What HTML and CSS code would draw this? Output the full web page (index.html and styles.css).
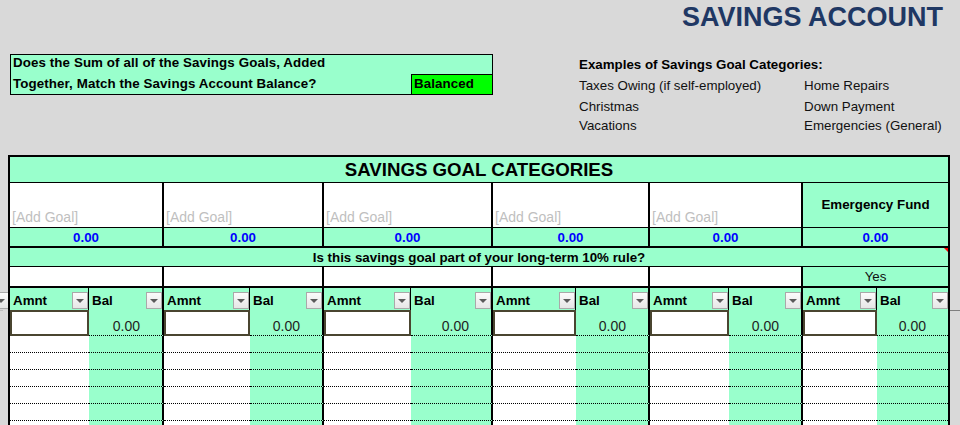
FILE: index.html
```html
<!DOCTYPE html>
<html lang="en">
<head>
<meta charset="utf-8">
<title>Savings Account</title>
<link rel="stylesheet" href="styles.css">
</head>
<body>
<header class="top">
  <div class="top-left">
    <div class="check">
      <div class="check-row1">Does the Sum of all of the Savings Goals, Added</div>
      <div class="check-row2">
        <span class="check-q">Together, Match the Savings Account Balance?</span>
        <span class="status">Balanced</span>
      </div>
    </div>
  </div>
  <div class="top-right">
    <h1 class="title">SAVINGS ACCOUNT</h1>
    <div class="examples">
      <div class="ex-head">Examples of Savings Goal Categories:</div>
      <div>Taxes Owing (if self-employed)</div><div>Home Repairs</div>
      <div>Christmas</div><div>Down Payment</div>
      <div>Vacations</div><div>Emergencies (General)</div>
    </div>
  </div>
</header>

<div class="sheet-wrap">
  <div class="gutter gutter-left">
    <div class="gutter-fill"></div>
    <span class="flt flt-cut"></span>
    <div class="pane-line pane-short"></div>
  </div>

  <div class="sheet">
    <div class="sheet-title">SAVINGS GOAL CATEGORIES</div>

    <div class="goal ge">[Add Goal]</div>
    <div class="goal ge">[Add Goal]</div>
    <div class="goal ge">[Add Goal]</div>
    <div class="goal ge">[Add Goal]</div>
    <div class="goal ge">[Add Goal]</div>
    <div class="goal goal-fixed">Emergency Fund</div>

    <div class="total ge">0.00</div>
    <div class="total ge">0.00</div>
    <div class="total ge">0.00</div>
    <div class="total ge">0.00</div>
    <div class="total ge">0.00</div>
    <div class="total">0.00</div>

    <div class="question">Is this savings goal part of your long-term 10% rule?</div>

    <div class="rule ge"></div>
    <div class="rule ge"></div>
    <div class="rule ge"></div>
    <div class="rule ge"></div>
    <div class="rule ge"></div>
    <div class="rule rule-yes">Yes</div>

    <div class="hd hd-a"><span class="hd-t">Amnt</span><span class="flt"></span></div>
    <div class="hd ge"><span class="hd-t">Bal</span><span class="flt"></span></div>
    <div class="hd hd-a"><span class="hd-t">Amnt</span><span class="flt"></span></div>
    <div class="hd ge"><span class="hd-t">Bal</span><span class="flt"></span></div>
    <div class="hd hd-a"><span class="hd-t">Amnt</span><span class="flt"></span></div>
    <div class="hd ge"><span class="hd-t">Bal</span><span class="flt"></span></div>
    <div class="hd hd-a"><span class="hd-t">Amnt</span><span class="flt"></span></div>
    <div class="hd ge"><span class="hd-t">Bal</span><span class="flt"></span></div>
    <div class="hd hd-a"><span class="hd-t">Amnt</span><span class="flt"></span></div>
    <div class="hd ge"><span class="hd-t">Bal</span><span class="flt"></span></div>
    <div class="hd hd-a"><span class="hd-t">Amnt</span><span class="flt"></span></div>
    <div class="hd"><span class="hd-t">Bal</span><span class="flt"></span></div>

    <div class="in"></div><div class="bal ge">0.00</div>
    <div class="in"></div><div class="bal ge">0.00</div>
    <div class="in"></div><div class="bal ge">0.00</div>
    <div class="in"></div><div class="bal ge">0.00</div>
    <div class="in"></div><div class="bal ge">0.00</div>
    <div class="in"></div><div class="bal">0.00</div>

    <div class="ea"></div><div class="eb ge"></div><div class="ea"></div><div class="eb ge"></div><div class="ea"></div><div class="eb ge"></div><div class="ea"></div><div class="eb ge"></div><div class="ea"></div><div class="eb ge"></div><div class="ea"></div><div class="eb"></div>
    <div class="ea"></div><div class="eb ge"></div><div class="ea"></div><div class="eb ge"></div><div class="ea"></div><div class="eb ge"></div><div class="ea"></div><div class="eb ge"></div><div class="ea"></div><div class="eb ge"></div><div class="ea"></div><div class="eb"></div>
    <div class="ea"></div><div class="eb ge"></div><div class="ea"></div><div class="eb ge"></div><div class="ea"></div><div class="eb ge"></div><div class="ea"></div><div class="eb ge"></div><div class="ea"></div><div class="eb ge"></div><div class="ea"></div><div class="eb"></div>
    <div class="ea"></div><div class="eb ge"></div><div class="ea"></div><div class="eb ge"></div><div class="ea"></div><div class="eb ge"></div><div class="ea"></div><div class="eb ge"></div><div class="ea"></div><div class="eb ge"></div><div class="ea"></div><div class="eb"></div>
    <div class="ea"></div><div class="eb ge"></div><div class="ea"></div><div class="eb ge"></div><div class="ea"></div><div class="eb ge"></div><div class="ea"></div><div class="eb ge"></div><div class="ea"></div><div class="eb ge"></div><div class="ea"></div><div class="eb"></div>
    <div class="ea"></div><div class="eb ge"></div><div class="ea"></div><div class="eb ge"></div><div class="ea"></div><div class="eb ge"></div><div class="ea"></div><div class="eb ge"></div><div class="ea"></div><div class="eb ge"></div><div class="ea"></div><div class="eb"></div>
  </div>

  <div class="gutter gutter-right">
    <div class="gutter-fill"></div>
    <div class="pane-line"></div>
  </div>
</div>
</body>
</html>
```

FILE: styles.css
```css
* { box-sizing: border-box; }

html, body {
  margin: 0;
  padding: 0;
  background: #D9D9D9;
  font-family: "Liberation Sans", Arial, sans-serif;
  color: #000;
  overflow: hidden;
}

/* ---------- top area ---------- */
.top {
  display: flex;
  height: 155px;
  padding-left: 10px;
}

.top-left {
  width: 483px;
  padding-top: 54px;
}

.check {
  border: 1px solid #000;
  background: #99FFCC;
  font-weight: bold;
  font-size: 13.33px;
  line-height: 15px;
  letter-spacing: 0.1px;
}

.check-row1 {
  height: 19px;
  padding-left: 2px;
}

.check-row2 {
  display: flex;
  height: 20px;
}

.check-q {
  flex: 1;
  padding: 2px 0 0 2px;
}

.status {
  width: 81px;
  border-top: 1px solid #000;
  border-left: 1px solid #000;
  background: #00FF00;
  padding: 1px 0 0 2px;
}

.top-right {
  flex: 1;
  margin-left: 86px;
}

.title {
  margin: 0;
  height: 33px;
  padding: 2px 17px 0 0;
  text-align: right;
  font-size: 27px;
  line-height: 31px;
  font-weight: bold;
  color: #1F3864;
}

.examples {
  margin-top: 22px;
  display: grid;
  grid-template-columns: 225px auto;
  grid-template-rows: 21px 21px 19px 20px;
  font-size: 13.33px;
  line-height: 20px;
  color: #111;
}

.ex-head {
  grid-column: 1 / -1;
  font-weight: bold;
  color: #000;
}

/* ---------- sheet ---------- */
.sheet-wrap {
  display: flex;
}

.gutter {
  overflow: hidden;
}

.gutter-left {
  width: 8px;
  flex: none;
}

.gutter-right {
  flex: 1;
}

.gutter-fill {
  height: 137px;
}

.gutter-right .gutter-fill {
  height: 155px;
}

.pane-line {
  height: 1px;
  background: #7F7F7F;
}

.pane-short {
  width: 3px;
  margin-top: 1px;
  background: #BDBDBD;
}

.flt-cut {
  margin-left: -7px;
}

.sheet {
  width: 942px;
  flex: none;
  border: 2px solid #000;
  border-bottom: none;
  display: grid;
  grid-template-columns: 79px 75px 86px 74px 87px 82px 83px 74px 79px 74px 74px 71px;
  font-size: 13.33px;
}

.ge { border-right: 2px solid #000; }

.sheet-title {
  grid-column: 1 / -1;
  height: 26px;
  border-bottom: 1px solid #000;
  background: #99FFCC;
  text-align: center;
  font-weight: bold;
  font-size: 18.67px;
  line-height: 24px;
  padding-top: 1px;
}

.goal {
  grid-column: span 2;
  height: 45px;
  border-bottom: 1px solid #000;
  background: #fff;
  display: flex;
  align-items: flex-end;
  padding: 0 2px 2px 2px;
  color: #BFBFBF;
  font-size: 14px;
  line-height: 16px;
}

.goal-fixed {
  background: #99FFCC;
  color: #000;
  font-weight: bold;
  font-size: 13.33px;
  align-items: center;
  justify-content: center;
  padding: 0 0 1px 0;
}

.total {
  grid-column: span 2;
  height: 20px;
  border-bottom: 2px solid #000;
  background: #99FFCC;
  color: #0000FF;
  font-weight: bold;
  text-align: center;
  line-height: 19px;
}

.question {
  grid-column: 1 / -1;
  position: relative;
  height: 19px;
  border-bottom: 1px solid #000;
  background: #99FFCC;
  font-weight: bold;
  text-align: center;
  line-height: 18px;
  padding-top: 1px;
}

.question::after {
  content: "";
  position: absolute;
  top: 0;
  right: 0;
  border-top: 4px solid #FF0000;
  border-left: 4px solid transparent;
}

.rule {
  grid-column: span 2;
  height: 21px;
  border-bottom: 2px solid #000;
  background: #fff;
  text-align: center;
  line-height: 19px;
}

.rule-yes {
  background: #99FFCC;
  color: #111;
}

.hd {
  height: 22px;
  background: #99FFCC;
  display: flex;
  align-items: flex-end;
  padding: 0 0 1px 3px;
  font-weight: bold;
}

.hd-a { border-right: 1px solid #000; }

.hd-t {
  flex: 1;
  line-height: 16px;
}

.flt {
  flex: none;
  width: 16px;
  height: 17px;
  border: 1px solid #A9A9A9;
  background: linear-gradient(#FBFBFB, #E6E6E6);
  display: flex;
  align-items: center;
  justify-content: center;
}

.flt::before {
  content: "";
  width: 0;
  height: 0;
  border-top: 4px solid #5A5A5A;
  border-left: 4px solid transparent;
  border-right: 4px solid transparent;
  margin-top: 1px;
}

.in {
  height: 26px;
  background: #fff;
  border: 2px solid #4A4530;
}

.bal {
  height: 26px;
  background: #99FFCC;
  border-bottom: 1px dotted #000;
  display: flex;
  align-items: flex-end;
  justify-content: flex-end;
  padding: 0 22px 1px 0;
  font-size: 14px;
  line-height: 16px;
  color: #1E1E1E;
}

.ea, .eb {
  height: 17px;
  border-bottom: 1px dotted #000;
}

.ea { background: #fff; }
.eb { background: #99FFCC; }
```
